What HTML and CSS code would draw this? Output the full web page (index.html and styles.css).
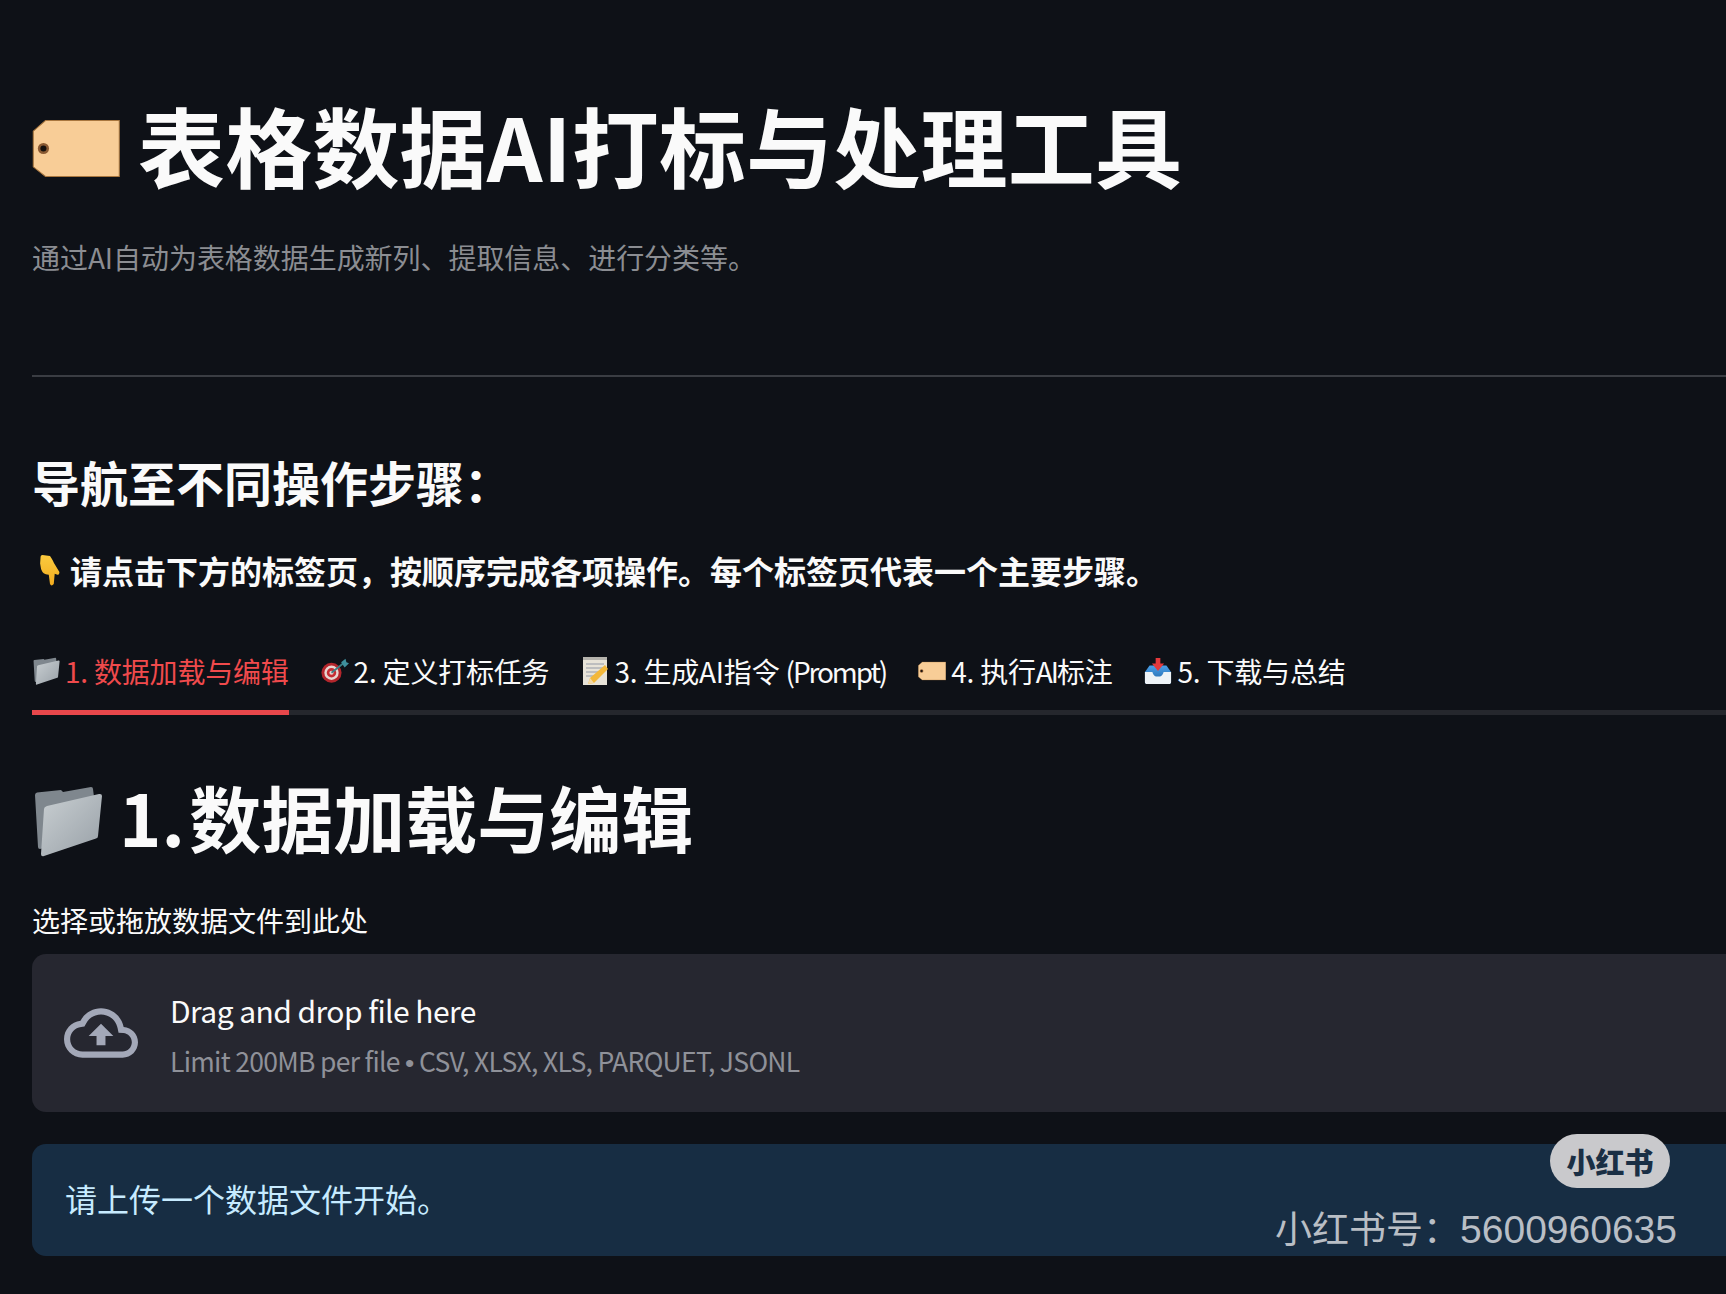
FILE: index.html
```html
<!DOCTYPE html>
<html lang="zh-CN">
<head>
    <meta charset="UTF-8">
    <meta name="viewport" content="width=device-width, initial-scale=1.0">
    <title>表格数据AI打标与处理工具</title>
    <link rel="stylesheet" href="styles.css">
</head>
<body>
    <svg class="icon-defs" width="0" height="0" aria-hidden="true">
        <defs>
            <linearGradient id="folder-front" x1="0" y1="0" x2="1" y2="1">
                <stop offset="0" stop-color="#c9cfd2"/>
                <stop offset="1" stop-color="#98a0a7"/>
            </linearGradient>
            <linearGradient id="tray-fill" x1="0" y1="0" x2="0" y2="1">
                <stop offset="0" stop-color="#4aa0ea"/>
                <stop offset="1" stop-color="#1f5f9e"/>
            </linearGradient>
            <linearGradient id="hand-fill" x1="0" y1="0" x2="0" y2="1">
                <stop offset="0" stop-color="#fbcb3f"/>
                <stop offset="1" stop-color="#f2ab1e"/>
            </linearGradient>
            <symbol id="i-tag" viewBox="0 0 86 56">
                <path d="M13 0.5H85.5V55.5H13L1 46V11Z" fill="#f8cd97" stroke="#a9773f" stroke-width="1"/>
                <circle cx="11" cy="28" r="5.500" fill="#8a5a33"/>
                <circle cx="11" cy="28" r="3" fill="#14100e"/>
            </symbol>
            <symbol id="i-folder" viewBox="7 10 70 72">
                <path d="M10 20Q10 18 12 17.500L36 15L38 17L66 12Q68 12 68 14L69 22L30 70L15 74Q13 74 13 72Z" fill="#7f878e"/>
                <path d="M22 31L74 19Q77 18.500 77 21L73 61Q73 63 71 63.500L19 81Q16 82 16 79L19 34Q19 32 22 31Z" fill="url(#folder-front)"/>
            </symbol>
            <symbol id="i-target" viewBox="0 0 32 28">
                <circle cx="12" cy="16" r="11.500" fill="#b3262c"/>
                <circle cx="12" cy="16" r="8.200" fill="#e8d5d0"/>
                <circle cx="12" cy="16" r="5.400" fill="#c62d33"/>
                <circle cx="12" cy="16" r="2.400" fill="#e8d5d0"/>
                <path d="M12 16L27 4" stroke="#3c7f86" stroke-width="2"/>
                <path d="M23 4L28 0L29 4L32 5L27 10Z" fill="#3e8f9c"/>
            </symbol>
            <symbol id="i-memo" viewBox="0 0 26 28">
                <rect x="1" y="0" width="24" height="28" fill="#e7e3d8"/>
                <rect x="1" y="0" width="24" height="3" fill="#b5b3ad"/>
                <path d="M4 7H22M4 11H22M4 15H16M4 19H12" stroke="#b0b2b6" stroke-width="1.300"/>
                <path d="M23 8L26 12L12 26L6 27L8 21Z" fill="#f3b83a"/>
                <path d="M8 21L6 27L12 26Z" fill="#f4d9a8"/>
            </symbol>
            <symbol id="i-hand" viewBox="0 0 22 34">
                <path d="M1 3Q1 1 3 1L11 2C14 6 15 9 16 11L21 19Q21 22 19 22L16 21L15 32Q12.500 35 11 32L9.700 22C5 22 3 20 1.500 16L0.500 10Z" fill="url(#hand-fill)"/>
            </symbol>
            <symbol id="i-inbox" viewBox="0 0 30 28">
                <path d="M1 15L6 8H24L29 15V26C29 27 28 28 27 28H3C2 28 1 27 1 26Z" fill="url(#tray-fill)"/>
                <path d="M1 15H9C10 19 12 20 15 20C18 20 20 19 21 15H29V26C29 27 28 28 27 28H3C2 28 1 27 1 26Z" fill="#eef3f7"/>
                <path d="M12.500 0H17.500V6H21.500L15 14L8.500 6H12.500Z" fill="#e4393c"/>
            </symbol>
        </defs>
    </svg>

    <main class="page">
        <h1 class="page-title">
            <svg class="title-icon"><use href="#i-tag"/></svg>
            表格数据AI打标与处理工具
        </h1>
        <p class="page-sub">通过AI自动为表格数据生成新列、提取信息、进行分类等。</p>
        <hr class="divider">

        <h3 class="nav-heading">导航至不同操作步骤&#xFF1A;</h3>
        <p class="nav-hint">
            <svg class="hint-icon"><use href="#i-hand"/></svg>
            请点击下方的标签页&#xFF0C;按顺序完成各项操作。每个标签页代表一个主要步骤。
        </p>

        <div class="tabs">
            <div class="tab active"><svg class="tab-icon"><use href="#i-folder"/></svg>1. 数据加载与编辑</div>
            <div class="tab"><svg class="tab-icon"><use href="#i-target"/></svg>2. 定义打标任务</div>
            <div class="tab"><svg class="tab-icon"><use href="#i-memo"/></svg><span>3. 生成AI指令 <span class="tab-latin">(Prompt)</span></span></div>
            <div class="tab"><svg class="tab-icon"><use href="#i-tag"/></svg><span>4. 执行<span class="tab-latin">AI</span>标注</span></div>
            <div class="tab"><svg class="tab-icon"><use href="#i-inbox"/></svg>5. 下载与总结</div>
        </div>

        <h2 class="section-title">
            <svg class="section-icon"><use href="#i-folder"/></svg>
            1. 数据加载与编辑
        </h2>

        <label class="upload-label">选择或拖放数据文件到此处</label>
        <div class="dropzone">
            <svg class="cloud" viewBox="0 0 24 24" fill="currentColor">
                <path d="M19.35 10.04C18.67 6.59 15.64 4 12 4 9.11 4 6.6 5.64 5.35 8.04 2.34 8.36 0 10.91 0 14c0 3.31 2.69 6 6 6h13c2.76 0 5-2.24 5-5 0-2.64-2.05-4.78-4.65-4.96zM19 18H6c-2.21 0-4-1.79-4-4 0-2.05 1.53-3.76 3.56-3.97l1.07-.11.5-.95C8.08 7.14 9.94 6 12 6c2.62 0 4.88 1.86 5.39 4.43l.3 1.5 1.53.11c1.56.1 2.78 1.41 2.78 2.96 0 1.65-1.35 3-3 3zM8 13h2.55v3h2.9v-3H16l-4-4z"/>
            </svg>
            <div class="drop-text">
                <div class="drop-main">Drag and drop file here</div>
                <div class="drop-limit">Limit 200MB per file <span class="dot">•</span> CSV, XLSX, XLS, PARQUET, JSONL</div>
            </div>
        </div>

        <div class="info-box">请上传一个数据文件开始。</div>
    </main>

    <div class="watermark">
        <div class="wm-logo">小红书</div>
        <div class="wm-id">小红书号&#xFF1A;<span class="wm-num">5600960635</span></div>
    </div>
</body>
</html>
```

FILE: styles.css
```css
html, body {
    margin: 0;
    height: 100%;
    overflow: hidden;
}
body {
    background-color: #0e1117;
    color: #fafafa;
    font-family: "Noto Sans CJK SC", "Noto Sans", sans-serif;
    position: relative;
}
.icon-defs {
    position: absolute;
}
.page {
    padding: 94px 0 0 32px;
}
.page-title {
    display: flex;
    align-items: center;
    gap: 18px;
    height: 100px;
    margin: 0;
    font-size: 87px;
    font-weight: 700;
    letter-spacing: 0.2px;
    line-height: 100px;
    white-space: nowrap;
}
.title-icon {
    width: 88px;
    height: 57px;
    margin-top: 8px;
    flex: none;
}
.page-sub {
    height: 40px;
    margin: 43px 0 0;
    font-size: 28px;
    letter-spacing: -0.05px;
    line-height: 40px;
    color: #8b8d92;
}
.divider {
    height: 2px;
    margin: 98px 0 0;
    border: none;
    background-color: #3a3d43;
}
.nav-heading {
    height: 60px;
    margin: 74px 0 0;
    font-size: 48px;
    font-weight: 700;
    line-height: 60px;
}
.nav-hint {
    display: flex;
    align-items: center;
    gap: 9px;
    height: 44px;
    margin: 37px 0 0;
    font-size: 32px;
    font-weight: 700;
    line-height: 44px;
    white-space: nowrap;
}
.hint-icon {
    width: 22px;
    height: 32px;
    margin-left: 7px;
    flex: none;
}
.tabs {
    display: flex;
    gap: 32px;
    margin-top: 59px;
    border-bottom: 5px solid #25272d;
}
.tab {
    display: flex;
    align-items: center;
    gap: 5px;
    height: 40px;
    padding-bottom: 19px;
    margin-bottom: -5px;
    border-bottom: 5px solid transparent;
    font-size: 28px;
    letter-spacing: -0.2px;
    line-height: 40px;
    white-space: nowrap;
}
.tab.active {
    color: #f04a4c;
    border-bottom-color: #e8474b;
}
.tab-icon {
    width: 28px;
    height: 28px;
    flex: none;
}
.tab-latin {
    letter-spacing: -2.1px;
}
.section-title {
    display: flex;
    align-items: center;
    gap: 17px;
    height: 90px;
    margin: 56px 0 0;
    font-size: 72px;
    font-weight: 700;
    line-height: 90px;
    word-spacing: -12px;
}
.section-icon {
    width: 70px;
    height: 72px;
    margin-top: 10px;
    flex: none;
}
.upload-label {
    display: block;
    height: 40px;
    margin-top: 39px;
    font-size: 28px;
    line-height: 40px;
}
.dropzone {
    display: flex;
    align-items: center;
    gap: 32px;
    height: 158px;
    margin: 14px -20px 0 0;
    padding-left: 32px;
    border-radius: 14px;
    background-color: #262730;
}
.cloud {
    width: 74px;
    height: 74px;
    color: #a3a8b8;
    flex: none;
}
.drop-text {
    padding-top: 4px;
}
.drop-main {
    font-size: 30px;
    letter-spacing: -0.55px;
    line-height: 44px;
}
.drop-limit {
    margin-top: 9px;
    font-size: 26.5px;
    letter-spacing: -0.7px;
    line-height: 40px;
    color: #8f9199;
}
.dot {
    font-family: "Liberation Sans", sans-serif;
}
.info-box {
    height: 112px;
    margin: 32px -20px 0 0;
    padding-left: 33px;
    border-radius: 14px;
    background-color: #172d43;
    color: #c7ebff;
    font-size: 32px;
    line-height: 109px;
}
/* platform watermark sits over the page */
.watermark {
    position: absolute;
    top: 1134px;
    right: 49px;
    display: flex;
    flex-direction: column;
    align-items: flex-end;
}
.wm-logo {
    width: 120px;
    height: 54px;
    margin-right: 7px;
    border-radius: 27px;
    background-color: #c9c9cc;
    color: #1a2f45;
    font-size: 29px;
    font-weight: 900;
    line-height: 54px;
    text-align: center;
}
.wm-id {
    margin-top: 18px;
    color: #b9bec5;
    font-family: "Liberation Sans", "Noto Sans CJK SC", sans-serif;
    font-size: 37px;
    line-height: 48px;
    white-space: nowrap;
}
.wm-num {
    font-size: 39px;
}
```
